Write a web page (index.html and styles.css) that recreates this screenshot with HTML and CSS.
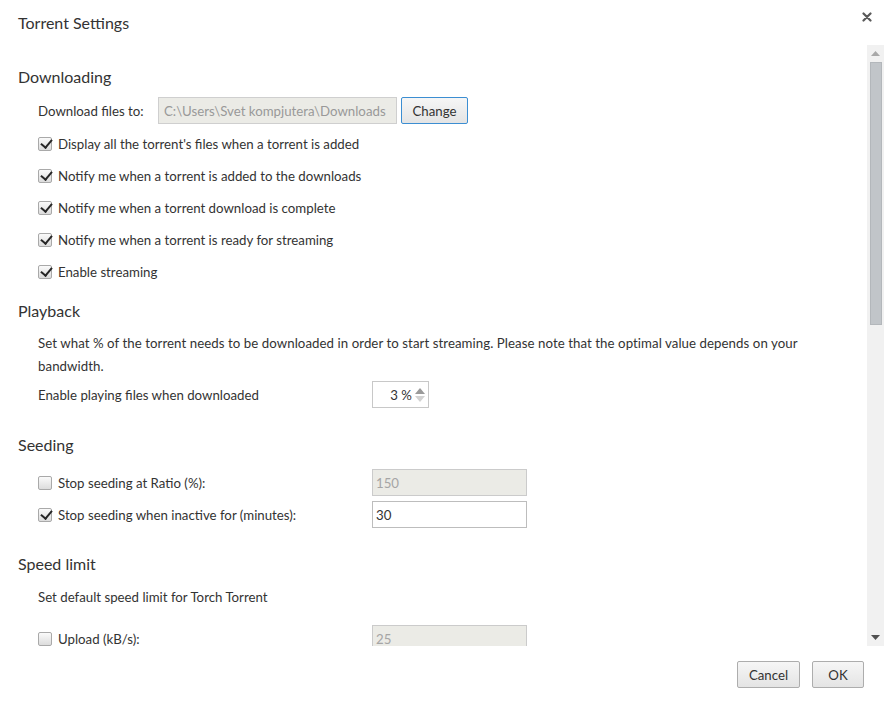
FILE: index.html
```html
<!DOCTYPE html>
<html>
<head>
<meta charset="utf-8">
<link rel="stylesheet" href="styles.css">
</head>
<body>
<div class="dialog">
  <div class="header">
    <div class="title">Torrent Settings</div>
    <div class="close"><svg width="10" height="10" viewBox="0 0 10 10"><path d="M1.5 1.5 L8.5 8.5 M8.5 1.5 L1.5 8.5" stroke="#5a5a5a" stroke-width="2.2" stroke-linecap="round"/></svg></div>
  </div>
  <div class="main">
    <div class="content">
      <h2 class="h first">Downloading</h2>
      <div class="pathrow">
        <span class="lbl">Download files to:</span>
        <input class="path" type="text" value="C:\Users\Svet kompjutera\Downloads" disabled>
        <button class="btn change">Change</button>
      </div>
      <div class="cbrow"><span class="cb on"></span>Display all the torrent's files when a torrent is added</div>
      <div class="cbrow"><span class="cb on"></span>Notify me when a torrent is added to the downloads</div>
      <div class="cbrow"><span class="cb on"></span>Notify me when a torrent download is complete</div>
      <div class="cbrow"><span class="cb on"></span>Notify me when a torrent is ready for streaming</div>
      <div class="cbrow"><span class="cb on"></span>Enable streaming</div>

      <h2 class="h pb">Playback</h2>
      <p class="desc">Set what % of the torrent needs to be downloaded in order to start streaming. Please note that the optimal value depends on your bandwidth.</p>
      <div class="frow spinrow">
        <span class="flbl plain">Enable playing files when downloaded</span>
        <div class="spin"><span class="val">3 %</span><span class="arrows"><svg width="14" height="20" viewBox="0 0 14 20"><path d="M2 9 L7 3 L12 9 Z" fill="#9a9a9a"/><path d="M2 11 L7 17 L12 11 Z" fill="#d2d2d2"/></svg></span></div>
      </div>

      <h2 class="h sec">Seeding</h2>
      <div class="frow r1">
        <span class="flbl"><span class="cb"></span>Stop seeding at Ratio (%):</span>
        <input class="num" type="text" value="150" disabled>
      </div>
      <div class="frow r2">
        <span class="flbl"><span class="cb on"></span>Stop seeding when inactive for (minutes):</span>
        <input class="num" type="text" value="30">
      </div>

      <h2 class="h sec sl">Speed limit</h2>
      <p class="note">Set default speed limit for Torch Torrent</p>
      <div class="frow r3">
        <span class="flbl"><span class="cb"></span>Upload (kB/s):</span>
        <input class="num" type="text" value="25" disabled>
      </div>
    </div>
    <div class="scrollbar">
      <div class="sarrow"><svg width="9" height="5" viewBox="0 0 9 5"><path d="M0 5 L4.5 0 L9 5 Z" fill="#a8a8a8"/></svg></div>
      <div class="thumb"></div>
      <div class="strack"></div>
      <div class="sarrow"><svg width="9" height="5" viewBox="0 0 9 5"><path d="M0 0 L4.5 5 L9 0 Z" fill="#505050"/></svg></div>
    </div>
  </div>
  <div class="footer">
    <button class="btn fb cancel">Cancel</button>
    <button class="btn fb ok">OK</button>
  </div>
</div>
</body>
</html>
```
FILE: styles.css
```css
* { box-sizing: border-box; }
html, body { margin: 0; padding: 0; background: #fff; }
body {
  font-family: "Lato", "Open Sans", sans-serif;
  font-size: 13.25px;
  color: #333;
}
.dialog {
  width: 884px;
  height: 704px;
  display: flex;
  flex-direction: column;
  overflow: hidden;
}
.header {
  height: 45px;
  display: flex;
  justify-content: space-between;
  padding: 12px 10px 0 18px;
}
.title {
  font-size: 16px;
  line-height: 22px;
  color: #333;
}
.close {
  line-height: 10px;
  width: 12px;
}
.main {
  flex: 1;
  display: flex;
  min-height: 0;
}
.content {
  flex: 1;
  overflow: hidden;
  padding-left: 18px;
}
.scrollbar {
  width: 17px;
  background: #f1f1f1;
  display: flex;
  flex-direction: column;
}
.sarrow {
  height: 17px;
  display: flex;
  align-items: center;
  justify-content: center;
}
.thumb {
  height: 263px;
  margin: 0 2px 0 3px;
  background: #c1c5c9;
  border: 1px solid #b3b7bb;
}
.strack { flex: 1; }
.h {
  margin: 0;
  font-weight: normal;
  font-size: 16px;
  line-height: 22px;
  color: #333;
}
.h.first { margin-top: 21px; }
.h.pb { margin-top: 12px; }
.h.sec { margin-top: 26px; }
.h.sl { margin-top: 25px; }
.pathrow {
  margin: 9px 0 4px 20px;
  display: flex;
  align-items: center;
  height: 27px;
}
.lbl { width: 120px; }
.path {
  width: 239px;
  height: 27px;
  border: 1px solid #cfcfcf;
  background: #ebebe6;
  color: #999;
  font: inherit;
  padding: 0 5px;
}
.btn {
  font: inherit;
  color: #333;
  background: linear-gradient(#f6f6f6, #e4e4e4);
  border: 1px solid #adadad;
  border-radius: 2px;
  height: 27px;
  padding: 0;
}
.change {
  width: 67px;
  margin-left: 4px;
  border-color: #3c8ed2;
}
.cbrow {
  height: 32px;
  display: flex;
  align-items: center;
  padding-left: 20px;
}
.cb {
  width: 14px;
  height: 14px;
  border: 1px solid #a9a9a9;
  border-radius: 2px;
  background: linear-gradient(#fafafa, #dcdcdc);
  margin-right: 6px;
  flex: none;
  position: relative;
}
.cb.on::after {
  content: "";
  position: absolute;
  left: 4px;
  top: -1px;
  width: 5px;
  height: 9px;
  border: solid #262626;
  border-width: 0 2.6px 2.6px 0;
  transform: rotate(40deg);
}
.desc {
  margin: 10px 40px 0 20px;
  line-height: 23px;
  letter-spacing: 0.06px;
}
.note {
  margin: 12px 0 0 20px;
  line-height: 20px;
}
.frow {
  display: flex;
  align-items: center;
  padding-left: 20px;
}
.flbl {
  width: 334px;
  display: flex;
  align-items: center;
}
.spinrow { margin-top: 3px; }
.spin {
  width: 57px;
  height: 27px;
  border: 1px solid #c8c8c8;
  display: flex;
  align-items: center;
  justify-content: flex-end;
}
.spin .val { margin-right: 1px; }
.arrows { display: flex; align-items: center; margin-right: 1px; }
.num {
  width: 155px;
  height: 27px;
  border: 1px solid #bdbdbd;
  font: inherit;
  color: #333;
  padding: 0 3px;
  background: #fff;
}
.num:disabled {
  background: #ebebe6;
  color: #a5a5a5;
  border-color: #cbcbcb;
}
.r1 { margin-top: 13px; }
.r2 { margin-top: 5px; }
.r3 { margin-top: 18px; }
.footer {
  height: 58px;
  display: flex;
  justify-content: flex-end;
  align-items: flex-start;
  padding: 15px 20px 0 0;
  gap: 12px;
}
.fb { width: 63px; }
.ok { width: 52px; }
```
